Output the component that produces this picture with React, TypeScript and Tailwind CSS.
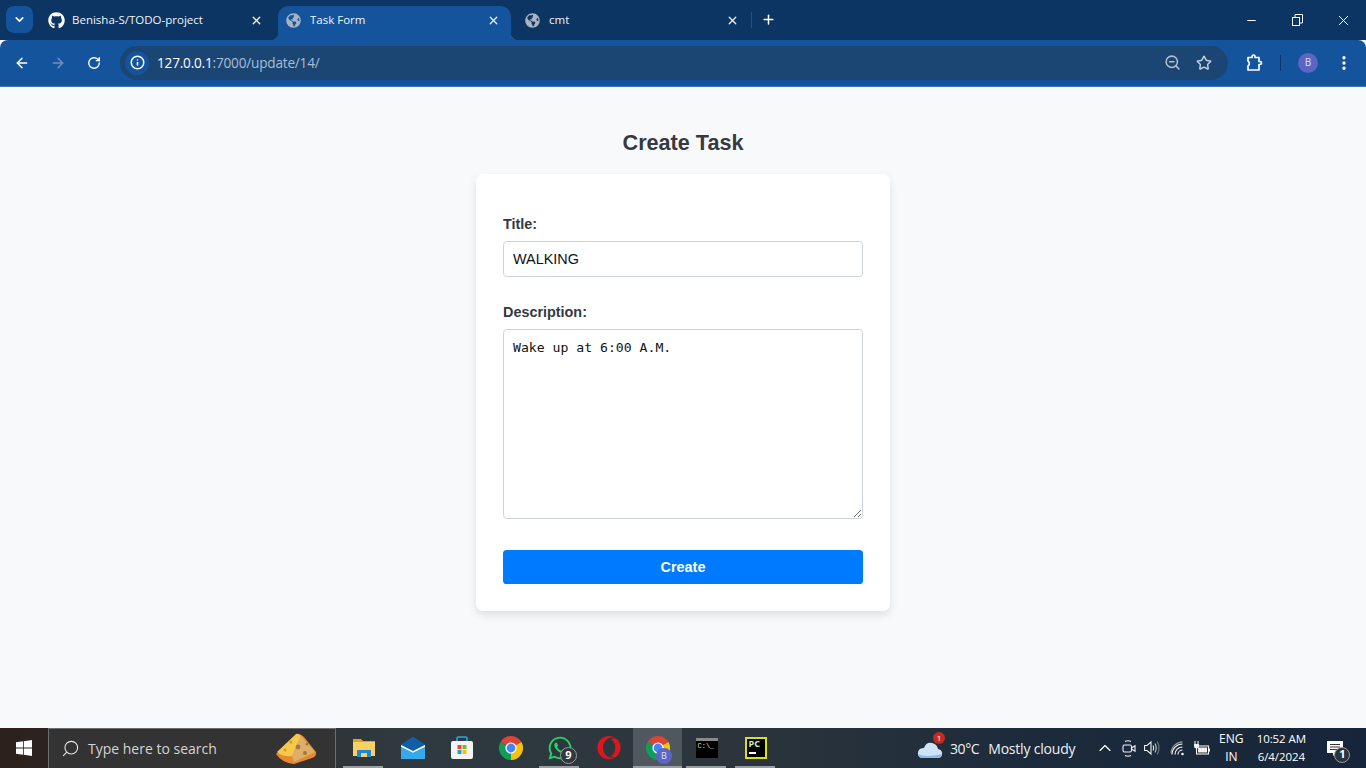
import { ArrowLeft, ArrowRight, ChevronDown, ChevronUp, EllipsisVertical, Info, Minus, Plus, RotateCw, Search, Star, X, ZoomOut } from "lucide-react";
import { FaGithub, FaGlobeAmericas, FaOpera, FaWhatsapp } from "react-icons/fa";

const uiFont = "[font-family:'Open_Sans','Noto_Sans',sans-serif]";

function ChromeIcon({ size = 24 }: { size?: number }) {
  return (
    <svg width={size} height={size} viewBox="0 0 24 24">
      <path d="M12 12 L1.6 6 A12 12 0 0 1 22.4 6 Z" fill="#db4437" />
      <path d="M12 12 L22.4 6 A12 12 0 0 1 12 24 Z" fill="#f4c20d" />
      <path d="M12 12 L12 24 A12 12 0 0 1 1.6 6 Z" fill="#0f9d58" />
      <circle cx="12" cy="12" r="5.6" fill="#fff" />
      <circle cx="12" cy="12" r="4.4" fill="#4285f4" />
    </svg>
  );
}

function WindowsLogo() {
  return (
    <svg width="16" height="16" viewBox="0 0 16 16" fill="#fff">
      <path d="M0 2.3 L7 1.3 V7.6 H0 Z" />
      <path d="M7.8 1.2 L16 0 V7.6 H7.8 Z" />
      <path d="M0 8.4 H7 V14.7 L0 13.7 Z" />
      <path d="M7.8 8.4 H16 V16 L7.8 14.8 Z" />
    </svg>
  );
}

function Cheese() {
  return (
    <svg width="44" height="32" viewBox="0 0 44 32">
      <path d="M2 21 L22 2 Q26 0 30 4 L42 19 Q43 23 38 25 L20 31 Q8 30 2 21 Z" fill="#e88a2c" />
      <path d="M3 19 L22 1 Q25 0 27 3 L18 23 Q8 24 3 19 Z" fill="#f7c948" />
      <path d="M27 3 L41 19 L20 29 L18 23 Z" fill="#dcae6a" />
      <circle cx="17" cy="9" r="1.6" fill="#d99a2b" />
      <circle cx="24" cy="14" r="2.4" fill="#a9763b" />
      <circle cx="31" cy="20" r="2" fill="#a9763b" />
      <circle cx="11" cy="17" r="1.6" fill="#d99a2b" />
      <circle cx="33" cy="11" r="1.5" fill="#a9763b" />
    </svg>
  );
}

function FolderIcon() {
  return (
    <svg width="22" height="20" viewBox="0 0 22 20">
      <path d="M0 1 H8 L10 3 H22 V6 H0 Z" fill="#e3a21a" />
      <rect x="0" y="4" width="22" height="14" fill="#fbd063" />
      <rect x="4" y="12" width="14" height="7" fill="#1e88d8" />
      <rect x="8" y="15" width="6" height="4" fill="#fbd063" />
    </svg>
  );
}

function MailIcon() {
  return (
    <svg width="24" height="22" viewBox="0 0 24 22">
      <path d="M12 0 L24 8 V22 H0 V8 Z" fill="#0a7cc9" />
      <path d="M0 7.5 L12 0 L24 7.5 L12 14 Z" fill="#0f5fa8" />
      <path d="M0 8 L12 14 L24 8 V10 L12 16 L0 10 Z" fill="#fff" />
      <path d="M0 10 L12 16 L24 10 V22 H0 Z" fill="#35a9ec" />
    </svg>
  );
}

function StoreIcon() {
  return (
    <svg width="24" height="24" viewBox="0 0 24 24">
      <path d="M7 5 V2.5 Q7 1 8.5 1 H15.5 Q17 1 17 2.5 V5" fill="none" stroke="#29a9e8" strokeWidth="1.6" />
      <rect x="1" y="5" width="22" height="18" rx="2" fill="#f4f4f4" />
      <rect x="7.5" y="9" width="4" height="4" fill="#e74a2b" />
      <rect x="12.5" y="9" width="4" height="4" fill="#7cb82f" />
      <rect x="7.5" y="14" width="4" height="4" fill="#1ba1e2" />
      <rect x="12.5" y="14" width="4" height="4" fill="#fbbc09" />
    </svg>
  );
}

function CloudIcon() {
  return (
    <svg width="26" height="22" viewBox="0 0 26 22">
      <path d="M5 21 Q0 20 1 15 Q2 11 7 11 Q9 5 15 6 Q20 7 21 12 Q26 13 25 18 Q24 21 21 21 Z" fill="#cfe3f7" />
      <path d="M1 17 Q8 21 25 17 Q24 21 21 21 H5 Q2 21 1 17 Z" fill="#8dbbe8" />
    </svg>
  );
}

function ExtensionIcon() {
  return (
    <svg width="17" height="18" viewBox="0 0 17 18" fill="none" stroke="#fff" strokeWidth="1.7" strokeLinejoin="round">
      <path d="M2 3.5 H6 V2.5 A1.5 1.5 0 0 1 9 2.5 V3.5 H13 V7.5 H14 A1.5 1.5 0 0 1 14 10.5 H13 V16 H2 V12 A3 3 0 0 0 2 7 Z" />
    </svg>
  );
}

function RestoreIcon() {
  return (
    <svg width="11" height="12" viewBox="0 0 11 12" fill="none" stroke="#fff" strokeWidth="1">
      <rect x="0.5" y="3.5" width="7" height="8" />
      <path d="M3 3 V0.5 H10.5 V9 H8" />
    </svg>
  );
}

function MeetIcon() {
  return (
    <svg width="14" height="17" viewBox="0 0 14 17" fill="none" stroke="#f2f2f2" strokeWidth="1.1">
      <path d="M3 1.5 Q6 0 9 1.5 M3 15.5 Q6 17 9 15.5" />
      <rect x="1" y="5" width="8.5" height="7" rx="1.5" />
      <path d="M9.5 8 L13 5.8 V11.2 L9.5 9 Z" />
    </svg>
  );
}

function VolumeIcon() {
  return (
    <svg width="17" height="16" viewBox="0 0 17 16" fill="none" stroke="#f2f2f2" strokeWidth="1.1">
      <path d="M0.6 5.5 H3 L7 2 V14 L3 10.5 H0.6 Z" />
      <path d="M9 5.5 Q10.5 8 9 10.5" />
      <path d="M11 3.5 Q13.5 8 11 12.5" stroke="#c8ccd0" />
      <path d="M13.3 1.5 Q16.8 8 13.3 14.5" stroke="#70787f" />
    </svg>
  );
}

function WifiIcon() {
  return (
    <svg width="15" height="15" viewBox="0 0 15 15" fill="none" stroke="#f2f2f2" strokeWidth="1.2">
      <path d="M8 13.5 A4.5 4.5 0 0 1 12.5 9" />
      <path d="M5 13.5 A7.5 7.5 0 0 1 12.5 6" />
      <path d="M2 13.5 A10.5 10.5 0 0 1 12.5 3" />
      <path d="M1 12 A12 12 0 0 1 12.5 0.8" stroke="#8d949a" />
      <circle cx="12.5" cy="13" r="1.3" fill="#f2f2f2" stroke="none" />
    </svg>
  );
}

function BatteryIcon() {
  return (
    <svg width="17" height="14" viewBox="0 0 17 14" fill="none" stroke="#f2f2f2" strokeWidth="1.1">
      <path d="M2 0 V3 M5 0 V3" />
      <path d="M1 3 H6 V5 Q6 7.5 3.5 7.5 Q1 7.5 1 5 Z" fill="#f2f2f2" stroke="none" />
      <rect x="3.5" y="5" width="12" height="8" />
      <rect x="5" y="6.5" width="9" height="5" fill="#f2f2f2" stroke="none" />
      <path d="M16.5 7.5 V10.5" />
    </svg>
  );
}

function TaskButton({ children, bar = "", active = false }: { children: React.ReactNode; bar?: string; active?: boolean }) {
  return (
    <div className={`relative flex h-full w-[49px] items-center justify-center ${active ? "bg-[#50585f]" : ""}`}>
      {children}
      {bar && <span className={`absolute bottom-0 h-[2px] bg-[#9a9ea2] ${bar}`} />}
    </div>
  );
}

function ChromeTab({ title, active = false }: { title: string; active?: boolean }) {
  return (
    <div className={`relative flex h-[34px] w-[233px] shrink-0 items-center pb-[6px] pl-[8px] pr-[11px] ${active ? "rounded-t-[10px] bg-[#14549c]" : ""}`}>
      {active && (
        <>
          <span className="absolute bottom-0 left-[-8px] size-[8px] bg-[radial-gradient(circle_at_0_0,transparent_8px,#14549c_8.5px)]" />
          <span className="absolute bottom-0 right-[-8px] size-[8px] bg-[radial-gradient(circle_at_100%_0,transparent_8px,#14549c_8.5px)]" />
        </>
      )}
      <span className="flex w-[24px] shrink-0 justify-start">
        <FaGlobeAmericas size={15} className="text-[#a9b4c2]" />
      </span>
      <span className="flex-1 truncate text-[11.5px] text-[#f0f4f8]">{title}</span>
      <X size={13} strokeWidth={2.4} className="text-[#f0f4f8]" />
    </div>
  );
}

export default function App() {
  return (
    <div className={`flex h-[768px] w-[1366px] flex-col overflow-hidden bg-[#f8f9fa] ${uiFont}`}>
      {/* Tab strip */}
      <div className="flex h-[40px] shrink-0 items-start bg-[#0c3563] pl-[6px] pt-[6px]">
        <div className="mr-[8px] flex h-[27px] w-[27px] items-center justify-center rounded-[8px] bg-[#14549c]">
          <ChevronDown size={13} strokeWidth={3} className="text-white" />
        </div>
        <div className="flex h-[34px] w-[237px] shrink-0 items-center pb-[6px] pl-[7px] pr-[15px]">
          <FaGithub size={17} className="mr-[7px] text-white" />
          <span className="flex-1 truncate text-[11.5px] text-[#f0f4f8]">Benisha-S/TODO-project</span>
          <X size={13} strokeWidth={2.4} className="text-[#f0f4f8]" />
        </div>
        <ChromeTab active title="Task Form" />
        <div className="ml-[6px]">
          <ChromeTab title="cmt" />
        </div>
        <div className="ml-[1px] mt-[6px] h-[16px] w-px bg-[#14549c]" />
        <Plus size={15} strokeWidth={2.4} className="ml-[9px] mt-[6px] text-white" />
        <div className="ml-auto flex h-[28px] items-center text-white">
          <div className="flex w-[46px] justify-center">
            <Minus size={13} strokeWidth={1.9} />
          </div>
          <div className="flex w-[46px] justify-center">
            <RestoreIcon />
          </div>
          <div className="flex w-[46px] justify-center">
            <X size={17} strokeWidth={1.4} />
          </div>
        </div>
      </div>

      {/* Toolbar */}
      <div className="flex h-[47px] shrink-0 items-center rounded-t-[8px] border-b border-[#3f77b5] bg-[#14549c] pb-[1px] text-white">
        <ArrowLeft size={16} strokeWidth={2.2} className="ml-[14px]" />
        <ArrowRight size={16} strokeWidth={2.2} className="ml-[20px] text-[#6f93bd]" />
        <RotateCw size={14} strokeWidth={2.4} className="ml-[21px]" />
        <div className="ml-[19px] flex h-[34px] w-[1108px] items-center rounded-full bg-[#1b4674] pl-[5px] pr-[16px]">
          <div className="flex size-[24px] items-center justify-center rounded-full bg-[#14549c]">
            <Info size={15} strokeWidth={2.4} />
          </div>
          <span className="ml-[8px] pt-[1px] text-[13.6px] tracking-[-0.2px]">
            127.0.0.1<span className="text-[#a9bdd3]">:7000/update/14/</span>
          </span>
          <ZoomOut size={17} strokeWidth={2.2} className="ml-auto text-[#b3bfcc]" />
          <Star size={16} strokeWidth={2.2} className="ml-[15px] text-[#c4ced9]" />
        </div>
        <span className="ml-[18px] flex">
          <ExtensionIcon />
        </span>
        <div className="ml-[17px] h-[16px] w-px bg-[#0c3563]" />
        <div className="ml-[17px] flex size-[20px] items-center justify-center rounded-full bg-[#5c64c4] text-[10px] text-[#dfe2f7]">B</div>
        <EllipsisVertical size={18} strokeWidth={2.4} className="ml-[17px]" />
      </div>

      {/* Page */}
      <main className="flex flex-1 flex-col items-center [font-family:'Liberation_Sans',Arial,sans-serif]">
        <h1 className="mt-[43px] text-[21.6px] font-bold leading-[25px] text-[#343a40]">Create Task</h1>
        <form className="mt-[19px] flex h-[437px] w-[414px] flex-col rounded-[7px] bg-white px-[27px] pt-[42px] shadow-[0_4px_9px_rgba(0,0,0,0.1)]">
          <label className="mb-[8px] text-[14.4px] font-bold leading-[17px] text-[#343a40]">Title:</label>
          <input
            readOnly
            value="WALKING"
            className="h-[36px] w-full rounded-[3.6px] border border-[#ced4da] px-[9px] text-[14.4px] text-[#111] outline-none"
          />
          <label className="mb-[8px] mt-[27px] text-[14.4px] font-bold leading-[17px] text-[#343a40]">Description:</label>
          <textarea
            readOnly
            value="Wake up at 6:00 A.M."
            className="h-[190px] w-full resize-y rounded-[3.6px] border border-[#ced4da] px-[9px] pb-[8px] pt-[10px] text-[13.15px] leading-[16px] text-[#111] outline-none [font-family:'DejaVu_Sans_Mono',monospace]"
          />
          <button type="button" className="mt-[31px] h-[34px] w-full rounded-[3.6px] bg-[#007bff] pt-[1px] text-[14.4px] font-bold text-white">
            Create
          </button>
        </form>
      </main>

      {/* Windows taskbar */}
      <div className="flex h-[40px] shrink-0 items-center bg-[linear-gradient(90deg,#2c201c_0%,#2f3a40_30%,#2b343b_55%,#1c2b3c_75%,#17253a_100%)] text-white">
        <div className="flex w-[48px] justify-center">
          <WindowsLogo />
        </div>
        <div className="flex h-full w-[288px] items-center border border-b-0 border-[#6b6f72] bg-[#333333] pl-[12px] pr-[17px]">
          <Search size={19} strokeWidth={1.4} className="-scale-x-100 text-[#e8e8e8]" />
          <span className="ml-[8px] text-[14px] text-[#d4d4d4]">Type here to search</span>
          <span className="ml-auto">
            <Cheese />
          </span>
        </div>
        <div className="ml-[3px] flex h-full">
          <TaskButton bar="left-[4px] w-[40px]">
            <FolderIcon />
          </TaskButton>
          <TaskButton>
            <MailIcon />
          </TaskButton>
          <TaskButton>
            <StoreIcon />
          </TaskButton>
          <TaskButton>
            <ChromeIcon />
          </TaskButton>
          <TaskButton bar="left-[4px] w-[40px]">
            <FaWhatsapp size={26} className="text-[#25d366]" />
            <span className="absolute left-[25px] top-[19px] flex size-[17px] items-center justify-center rounded-full border border-[#9a9a9a] bg-[#2f3a40] text-[11px] font-bold">9</span>
          </TaskButton>
          <TaskButton>
            <FaOpera size={24} className="text-[#e0161f]" />
          </TaskButton>
          <TaskButton active bar="left-0 w-full">
            <ChromeIcon />
            <span className="absolute left-[23px] top-[20px] flex size-[16px] items-center justify-center rounded-full bg-[#5c64c4] text-[9px] text-[#dfe2f7]">B</span>
          </TaskButton>
          <TaskButton bar="left-[4px] w-[40px]">
            <div className="h-[20px] w-[22px] border-t-[3px] border-[#8a8a8a] bg-black pl-[2px] text-[7px] leading-[10px] text-[#ddd] [font-family:'Liberation_Mono',monospace]">C:\_</div>
          </TaskButton>
          <TaskButton bar="left-[4px] w-[40px]">
            <div className="flex size-[22px] flex-col border-2 border-[#d7e11c] bg-black pl-[2px] text-[9px] font-bold leading-[10px] text-[#d7f0c0]">
              PC
              <span className="mt-[3px] h-[1.5px] w-[7px] bg-white" />
            </div>
          </TaskButton>
        </div>

        {/* Tray */}
        <div className="relative ml-[137px]">
          <CloudIcon />
          <span className="absolute right-[-2px] top-[-5px] flex size-[12px] items-center justify-center rounded-full bg-[#c42b1c] text-[8px]">1</span>
        </div>
        <span className="ml-[7px] text-[14px] tracking-[-0.4px] text-[#f0f0f0]">30°C</span>
        <span className="ml-[9px] text-[14px] tracking-[-0.2px] text-[#f0f0f0]">Mostly cloudy</span>
        <ChevronUp size={20} strokeWidth={1.4} className="ml-[20px]" />
        <span className="ml-[7px] flex">
          <MeetIcon />
        </span>
        <span className="ml-[8px] flex">
          <VolumeIcon />
        </span>
        <span className="ml-[9px] flex">
          <WifiIcon />
        </span>
        <span className="ml-[8px] flex">
          <BatteryIcon />
        </span>
        <div className="ml-[8px] w-[26px] text-center text-[12px] leading-[18px]">
          ENG
          <br />
          IN
        </div>
        <div className="ml-[5px] w-[64px] text-center text-[11.5px] leading-[18px] tracking-[-0.1px]">
          10:52 AM
          <br />
          6/4/2024
        </div>
        <div className="relative ml-[14px]">
          <svg width="16" height="15" viewBox="0 0 16 15" fill="#fff">
            <path d="M0 0 H16 V12 H9 L6 15 V12 H0 Z" />
            <path d="M3 3.5 H13 M3 6 H13 M3 8.5 H10" stroke="#333" strokeWidth="1" />
          </svg>
          <span className="absolute left-[7px] top-[6px] flex size-[16px] items-center justify-center rounded-full border border-[#9a9a9a] bg-[#2a3340] text-[11px] font-bold">1</span>
        </div>
      </div>
    </div>
  );
}
